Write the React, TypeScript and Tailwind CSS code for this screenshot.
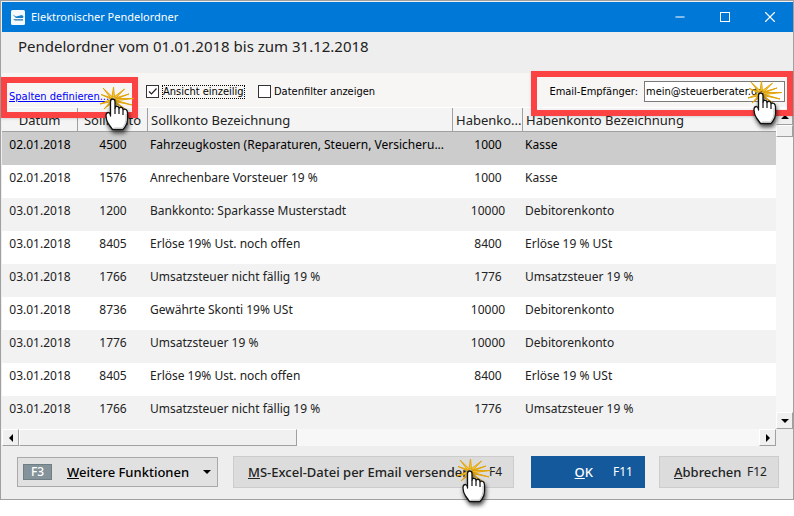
import { Minus, X } from "lucide-react";

type Booking = {
  date: string;
  debit: string;
  debitName: string;
  credit: string;
  creditName: string;
};

const bookings: Booking[] = [
  { date: "02.01.2018", debit: "4500", debitName: "Fahrzeugkosten (Reparaturen, Steuern, Versicheru...", credit: "1000", creditName: "Kasse" },
  { date: "02.01.2018", debit: "1576", debitName: "Anrechenbare Vorsteuer 19 %", credit: "1000", creditName: "Kasse" },
  { date: "03.01.2018", debit: "1200", debitName: "Bankkonto: Sparkasse Musterstadt", credit: "10000", creditName: "Debitorenkonto" },
  { date: "03.01.2018", debit: "8405", debitName: "Erlöse 19% Ust. noch offen", credit: "8400", creditName: "Erlöse 19 % USt" },
  { date: "03.01.2018", debit: "1766", debitName: "Umsatzsteuer nicht fällig 19 %", credit: "1776", creditName: "Umsatzsteuer 19 %" },
  { date: "03.01.2018", debit: "8736", debitName: "Gewährte Skonti 19% USt", credit: "10000", creditName: "Debitorenkonto" },
  { date: "03.01.2018", debit: "1776", debitName: "Umsatzsteuer 19 %", credit: "10000", creditName: "Debitorenkonto" },
  { date: "03.01.2018", debit: "8405", debitName: "Erlöse 19% Ust. noch offen", credit: "8400", creditName: "Erlöse 19 % USt" },
  { date: "03.01.2018", debit: "1766", debitName: "Umsatzsteuer nicht fällig 19 %", credit: "1776", creditName: "Umsatzsteuer 19 %" },
];

function ClickHand({ className }: { className: string }) {
  return (
    <svg
      viewBox="0 0 38 50"
      aria-hidden="true"
      className={`pointer-events-none absolute z-20 h-[50px] w-[38px] overflow-visible ${className}`}
    >
      <g fill="#f6cb45" stroke="#e2a40a" strokeWidth="1" strokeLinejoin="round">
        <path d="M12 11 L13.5 1 L14.5 11Z" />
        <path d="M14 11 L24.5 3 L16 12Z" />
        <path d="M15 12 L29 8 L16 13Z" />
        <path d="M15 12.5 L34 12.5 L16 14.5Z" />
        <path d="M15 14 L32 19 L15 15.5Z" />
        <path d="M14 14.5 L25 23 L13 16Z" />
        <path d="M12 14 L4 23 L13 16Z" />
        <path d="M12 13 L0 18 L12 15.5Z" />
        <path d="M12 12 L1 8.5 L12 13.5Z" />
        <path d="M12.5 11 L3 2 L11 12.5Z" />
      </g>
      <g className="drop-shadow-[1px_3px_2px_rgba(0,0,0,0.7)]">
        <path
          d="M10.5 30V15.5Q10.5 13 12.7 13Q15 13 15 15.5V22Q15.4 20 17.2 20.3Q19 20.5 19 22.5Q20 20.8 21.6 21.4Q23 22 23 23.7Q24.5 22.5 26 23.5Q27.5 24.5 27.5 27V33Q27.5 38 25 41L23 43.5H12.5L8.5 38Q6 34 6 30Q6 26.5 8.5 26.5Q10 27 10.5 29Z"
          fill="#fff"
          stroke="#111"
          strokeWidth="1.3"
          strokeLinejoin="round"
        />
        <path d="M15 22V28M19 22.5V28M23 24V29" stroke="#111" strokeWidth="1.2" />
        <path d="M26 28V34Q26 37 22.5 42H14" stroke="#c4c4c4" strokeWidth="1" fill="none" />
      </g>
    </svg>
  );
}

type Direction = "up" | "down" | "left" | "right";

const arrowPaths: Record<Direction, string> = {
  up: "M0 6H8L4 2Z",
  down: "M0 2H8L4 6Z",
  left: "M6 0V8L2 4Z",
  right: "M2 0V8L6 4Z",
};

function Arrow({ direction }: { direction: Direction }) {
  return (
    <svg viewBox="0 0 8 8" className="size-2" aria-hidden="true">
      <path d={arrowPaths[direction]} fill="#000" />
    </svg>
  );
}

function ScrollButton({ direction, label }: { direction: Direction; label: string }) {
  return (
    <button
      type="button"
      aria-label={label}
      className="flex size-[17px] shrink-0 items-center justify-center border border-t-white border-l-white border-r-[#a0a0a0] border-b-[#a0a0a0] bg-[#f0f0f0]"
    >
      <Arrow direction={direction} />
    </button>
  );
}

const headCell =
  "h-6 overflow-hidden whitespace-nowrap border-r border-b border-[#a0a0a0] px-[3px] text-left font-normal text-[13px] leading-5 align-middle last:border-r-0";

export default function App() {
  return (
    <div className="min-h-screen bg-white font-['Noto_Sans','Segoe_UI',sans-serif] text-[#222]">
      <main className="flex flex-col border border-[#a0a0a0] bg-[#eeeeee] pt-px pl-px">
        <header className="flex h-[30px] items-center bg-[#0078d7] pl-[9px] text-white">
          <svg viewBox="0 0 14 15" className="h-[15px] w-[14px]" aria-hidden="true">
            <rect width="14" height="15" rx="1.5" fill="#f7fafc" />
            <path d="M1.5 4.5L5 6.5L11 5L12.5 6.5L12 8H5Z" fill="#1683c8" />
            <path d="M2 9.2H12V10.5H4Z" fill="#1f6ea7" />
          </svg>
          <h1 className="ml-[6px] flex-1 text-[11px] leading-4">Elektronischer Pendelordner</h1>
          <button type="button" aria-label="Minimieren" className="flex h-full w-[45px] items-center justify-center">
            <Minus size={14} strokeWidth={2} />
          </button>
          <button type="button" aria-label="Maximieren" className="flex h-full w-[45px] items-center justify-center">
            <svg viewBox="0 0 10 10" className="size-[10px]" aria-hidden="true">
              <rect x="0.5" y="0.5" width="9" height="9" fill="none" stroke="currentColor" />
            </svg>
          </button>
          <button type="button" aria-label="Schließen" className="flex h-full w-[46px] items-center justify-center">
            <X size={18} strokeWidth={1.5} />
          </button>
        </header>

        <h2 className="h-[41px] pt-1 pl-4 text-[15px] leading-5 font-normal">
          Pendelordner vom 01.01.2018 bis zum 31.12.2018
        </h2>

        <section className="relative flex h-[35px] items-center border-b border-white bg-[#f7f6f5] pt-[3px] pr-2 pl-[7px] font-['DejaVu_Sans_Condensed','DejaVu_Sans',Tahoma,sans-serif] text-[11px] leading-4 text-black">
          <a href="#spalten" className="w-[137px] pt-[10px] text-[#0000ff] underline">
            Spalten definieren...
          </a>
          <label className="flex w-28 items-center gap-[3px]">
            <input
              type="checkbox"
              defaultChecked
              className="size-[13px] appearance-none border border-[#333] bg-white"
            />
            <svg viewBox="0 0 13 13" className="pointer-events-none -ml-4 size-[13px]" aria-hidden="true">
              <path d="M3 6.5L5.5 9L10.5 3.5" fill="none" stroke="#222" strokeWidth="1.2" />
            </svg>
            <span className="border border-dotted border-black leading-3 whitespace-nowrap">Ansicht einzeilig</span>
          </label>
          <label className="flex items-center gap-[3px]">
            <input type="checkbox" className="size-[13px] appearance-none border border-[#333] bg-white" />
            Datenfilter anzeigen
          </label>
          <label htmlFor="recipient" className="mr-[6px] ml-auto">
            Email-Empfänger:
          </label>
          <input
            id="recipient"
            type="email"
            defaultValue="mein@steuerberater.de"
            className="h-[21px] w-[141px] border border-[#7a7a7a] bg-white px-px"
          />
          <div className="pointer-events-none absolute top-1 -left-px z-10 h-[41px] w-[137px] border-[6px] border-[#fc4343] shadow-sm" />
          <div className="pointer-events-none absolute -top-[2px] right-0 z-10 h-[45px] w-[262px] border-[6px] border-[#fc4343] shadow-sm" />
          <ClickHand className="top-[13px] left-[98px]" />
          <ClickHand className="top-[7px] right-[7px]" />
        </section>

        <section className="flex">
          <div className="min-w-0 flex-1">
            <table className="w-full table-fixed border-separate border-spacing-0 text-[12px] leading-4">
              <colgroup>
                <col className="w-[76px]" />
                <col className="w-[70px]" />
                <col className="w-[305px]" />
                <col className="w-[70px]" />
                <col />
              </colgroup>
              <thead className="bg-[#f4f4f4]">
                <tr>
                  <th className={`${headCell} text-center!`}>Datum</th>
                  <th className={`${headCell} text-center!`}>Sollkonto</th>
                  <th className={headCell}>Sollkonto Bezeichnung</th>
                  <th className={headCell}>Habenko...</th>
                  <th className={headCell}>Habenkonto Bezeichnung</th>
                </tr>
              </thead>
              <tbody>
                {bookings.map((b, i) => (
                  <tr
                    key={i}
                    className="h-[33px] align-top odd:bg-[#f2f2f2] first:bg-[#cccccc]! first:text-black even:bg-white"
                  >
                    <td className="pt-[5px] text-center">{b.date}</td>
                    <td className="pt-[5px] text-center">{b.debit}</td>
                    <td className="truncate pt-[5px] pl-[2px]">{b.debitName}</td>
                    <td className="pt-[5px] text-center">{b.credit}</td>
                    <td className="truncate pt-[5px] pl-[2px]">{b.creditName}</td>
                  </tr>
                ))}
              </tbody>
            </table>
            <div className="flex h-[17px] bg-[#f7f7f7]">
              <ScrollButton direction="left" label="Nach links" />
              <div className="w-[278px] border border-t-white border-l-white border-r-[#a0a0a0] border-b-[#a0a0a0] bg-[#f0f0f0]" />
              <div className="flex-1" />
              <ScrollButton direction="right" label="Nach rechts" />
            </div>
          </div>
          <div className="mb-[17px] flex w-[17px] flex-col bg-[#f7f7f7]">
            <ScrollButton direction="up" label="Nach oben" />
            <div className="h-3 border border-t-white border-l-white border-r-[#a0a0a0] border-b-[#a0a0a0] bg-[#f0f0f0]" />
            <div className="flex-1" />
            <ScrollButton direction="down" label="Nach unten" />
          </div>
        </section>

        <footer className="flex items-center pt-[10px] pr-[14px] pb-[11px] pl-[15px] text-[13px] leading-5 font-medium">
          <button
            type="button"
            className="flex h-[30px] w-[201px] items-center border border-[#a9a9a9] bg-[#e1e1e1] pr-[6px] pl-[5px] text-black"
          >
            <span className="w-[29px] border border-[#6f7d85] bg-[#84929a] text-[12px] leading-[14px] text-white">F3</span>
            <span className="ml-[15px] flex-1 text-left whitespace-nowrap">
              <u>W</u>eitere Funktionen
            </span>
            <Arrow direction="down" />
          </button>
          <button
            type="button"
            className="relative ml-[15px] flex h-8 w-[281px] items-center justify-between border border-[#cccccc] bg-[#dcdcdc] pr-[11px] pl-[14px]"
          >
            <span className="whitespace-nowrap">
              <u>M</u>S-Excel-Datei per Email versenden
            </span>
            <span className="text-[12px] font-normal">F4</span>
            <ClickHand className="top-px right-[18px]" />
          </button>
          <button
            type="button"
            className="ml-[17px] flex h-8 w-[114px] items-center justify-end gap-5 bg-[#14599b] pr-3 text-white"
          >
            <span>
              <u>O</u>K
            </span>
            <span className="text-[12px] font-normal">F11</span>
          </button>
          <button
            type="button"
            className="ml-auto flex h-8 w-[120px] items-center justify-between border border-[#cccccc] bg-[#dcdcdc] pr-[11px] pl-[14px]"
          >
            <span>
              <u>A</u>bbrechen
            </span>
            <span className="text-[12px] font-normal">F12</span>
          </button>
        </footer>
      </main>
    </div>
  );
}
